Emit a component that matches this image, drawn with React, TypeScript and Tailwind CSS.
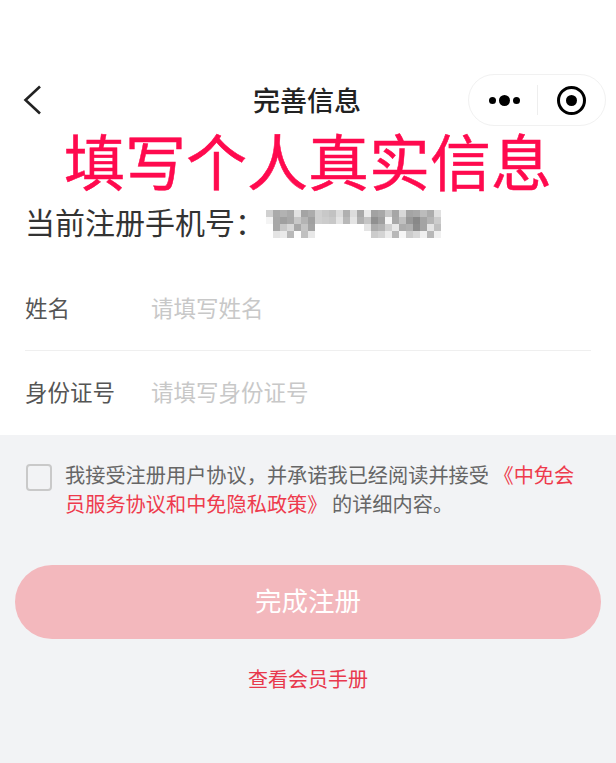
const mosaic = [
  ["d0", "aa", "b2", "aa", "e2", "a4", "ac", "d0", "c8", "c2", "dc", "b0", "dc", "a8", "ea", "a2", "a8", "c8", "a6", "d8", "a4", "a8", "bc", "ac", "e0"],
  ["f4", "a8", "a0", "a8", "c8", "b4", "a0", "d0", "cc", "c8", "e4", "b8", "e4", "b0", "c4", "90", "a0", "f6", "a8", "c0", "98", "88", "a4", "b4", "cc"],
  ["ff", "a8", "c8", "d8", "a8", "c4", "a4", "ff", "ff", "ff", "ff", "ff", "ff", "ff", "e4", "ac", "b4", "d0", "e8", "ac", "b0", "8c", "a4", "e4", "c0"],
  ["ff", "e4", "ea", "b8", "fc", "c0", "e8", "ff", "ff", "ff", "ff", "ff", "ff", "ff", "ff", "cc", "d4", "ec", "b8", "f6", "cc", "d8", "f0", "b8", "f0"],
];

export default function App() {
  return (
    <div
      className="w-[616px] h-[763px] bg-[#f2f3f5] overflow-hidden"
      style={{ fontFamily: '"Noto Sans CJK SC", sans-serif' }}
    >
      <div className="bg-white h-[435px] flex flex-col">
        {/* nav bar */}
        <div className="h-[132px] pt-[74px] pl-[22px] pr-[10px] flex items-start">
          <div className="w-[27px] h-[52px] flex items-center">
            <svg width="22" height="32" viewBox="0 0 22 32" fill="none">
              <path d="M18 2.5 L3.5 16 L18 29.5" stroke="#222" strokeWidth="2.6" />
            </svg>
          </div>
          <div className="flex-1 h-[52px] flex items-center justify-center pl-[97px] pb-[2px] text-[27px] font-medium text-[#222] leading-none">
            完善信息
          </div>
          <div className="w-[138px] h-[52px] rounded-full border border-[#f1f1f1] flex items-center">
            <div className="w-[68px] flex items-center justify-center gap-[3px] pl-[2px]">
              <span className="w-[7px] h-[7px] rounded-full bg-black" />
              <span className="w-[11px] h-[11px] rounded-full bg-black" />
              <span className="w-[7px] h-[7px] rounded-full bg-black" />
            </div>
            <div className="w-px h-[30px] bg-[#eeeeee]" />
            <div className="flex-1 flex items-center justify-center">
              <div className="w-[29px] h-[29px] rounded-full border-[3px] border-black flex items-center justify-center">
                <span className="w-[11px] h-[11px] rounded-full bg-black" />
              </div>
            </div>
          </div>
        </div>

        <div className="text-center text-[#ff0a4e] text-[61px] leading-[62px] -mt-[3px] mb-[3px] [-webkit-text-stroke:0.5px_#ff0a4e]">填写个人真实信息</div>

        <div className="flex items-center pl-[25px] h-[58px] text-[30px] text-[#333] leading-none">
          <span className="w-[241px] whitespace-nowrap pb-[5px]">当前注册手机号：</span>
          <div className="flex flex-col pt-[2px]">
            {mosaic.map((row, r) => (
              <div key={r} className="flex">
                {row.map((c, i) => (
                  <span key={i} className="w-[7px] h-[7px]" style={{ backgroundColor: `#${c}${c}${c}` }} />
                ))}
              </div>
            ))}
          </div>
        </div>

        <div className="mx-[25px] mt-[15px] h-[84px] pb-[2px] flex items-center border-b border-[#efefef] text-[22.5px]">
          <span className="w-[126px] text-[#555]">姓名</span>
          <span className="text-[#c8c8c8]">请填写姓名</span>
        </div>
        <div className="mx-[25px] h-[84px] pb-[2px] flex items-center text-[22.5px]">
          <span className="w-[126px] text-[#555]">身份证号</span>
          <span className="text-[#c8c8c8]">请填写身份证号</span>
        </div>
      </div>

      <div className="flex pl-[26px] pt-[25px]">
        <div className="w-[26px] h-[27px] mt-[4px] rounded-[4px] border-2 border-[#c9c9c9] shrink-0" />
        <p className="ml-[13px] w-[520px] text-[20.2px] leading-[29px] text-[#666]">
          我接受注册用户协议，并承诺我已经阅读并接受 <span className="text-[#ee3b4d]">《中免会员服务协议和中免隐私政策》</span> 的详细内容。
        </p>
      </div>

      <div className="mx-[15px] mt-[47px] h-[74px] pb-[5px] rounded-full bg-[#f3b8bd] flex items-center justify-center text-white text-[26.5px]">
        完成注册
      </div>
      <div className="mt-[27px] text-center text-[#e8394d] text-[20px] leading-[26px]">查看会员手册</div>
    </div>
  );
}
